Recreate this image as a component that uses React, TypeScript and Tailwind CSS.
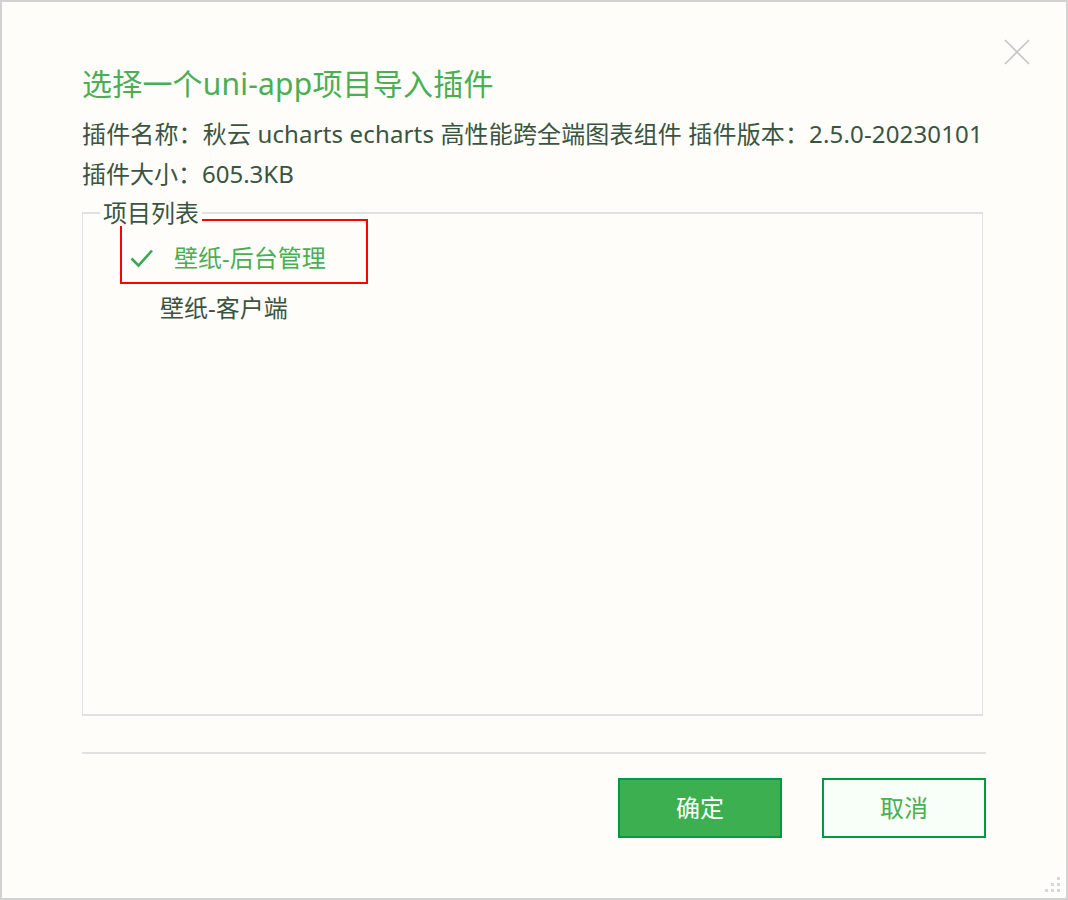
const font = { fontFamily: '"Noto Sans", "Noto Sans CJK SC", sans-serif' };

function CloseIcon() {
    return (
        <svg width="26" height="26" viewBox="0 0 26 26" className="absolute left-[1002px] top-[37px]">
            <path d="M1 1 L25 25 M25 1 L1 25" stroke="#c6c6c6" strokeWidth="1.6" />
        </svg>
    )
}

function CheckMark() {
    return (
        <svg width="24" height="20" viewBox="0 0 24 20" className="shrink-0">
            <polyline points="1.5,10.5 8.5,17.5 22,2.5" fill="none" stroke="#3aa85a" strokeWidth="2.6" />
        </svg>
    )
}

function Grip() {
    return (
        <div className="absolute right-[6px] bottom-[6px] grid grid-cols-3 gap-[3px]">
            <span className="w-[3px] h-[3px]" />
            <span className="w-[3px] h-[3px]" />
            <span className="w-[3px] h-[3px] bg-[#d8d8d8]" />
            <span className="w-[3px] h-[3px]" />
            <span className="w-[3px] h-[3px] bg-[#d8d8d8]" />
            <span className="w-[3px] h-[3px] bg-[#d8d8d8]" />
            <span className="w-[3px] h-[3px] bg-[#d8d8d8]" />
            <span className="w-[3px] h-[3px] bg-[#d8d8d8]" />
            <span className="w-[3px] h-[3px] bg-[#d8d8d8]" />
        </div>
    )
}

export default function App() {
    return (
        <div style={font} className="relative w-[1068px] h-[900px] border-2 border-[#d2d2d2] bg-[#fefdfa] overflow-hidden">
            <CloseIcon />
            <div className="pl-[80px] pt-[52px] w-[984px] flex flex-col">
                <h1 className="text-[30px] leading-[60px] tracking-[0.2px] text-[#4aae52] whitespace-nowrap">选择一个uni-app项目导入插件</h1>
                <p className="text-[24px] leading-[40px] tracking-[0.15px] text-[#3a5440] whitespace-nowrap">插件名称：秋云 ucharts echarts 高性能跨全端图表组件 插件版本：2.5.0-20230101</p>
                <p className="text-[24px] leading-[40px] text-[#3a5440] whitespace-nowrap">插件大小：605.3KB</p>

                <div className="relative mt-[18px] w-[901px] h-[504px] border-x border-y-2 border-[#e1e1e1]">
                    <span className="absolute left-[17px] top-[-14px] px-[3px] bg-[#fefdfa] text-[24px] leading-[26px] text-[#3a5440]">项目列表</span>
                    <div className="pl-[37px] pt-[5px] flex flex-col">
                        <div className="w-[248px] h-[65px] border-2 border-[#ff0000] flex items-center pt-[12px] pl-[8px] text-[24px] text-[#4aae52]">
                            <CheckMark />
                            <span className="ml-[20px] leading-[30px]">壁纸-后台管理</span>
                        </div>
                        <div className="pl-[40px] text-[24px] leading-[48px] text-[#3a5440]">壁纸-客户端</div>
                    </div>
                </div>

                <div className="mt-[36px] h-[2px] w-[904px] bg-[#e1e1e1]" />

                <div className="mt-[24px] flex justify-end gap-[40px]">
                    <button className="w-[164px] h-[60px] border-2 border-[#009a44] bg-[#3caf50] text-white text-[24px]">确定</button>
                    <button className="w-[164px] h-[60px] border-2 border-[#009a44] bg-[#f8fef8] text-[#4aae52] text-[24px]">取消</button>
                </div>
            </div>
            <Grip />
        </div>
    )
}
